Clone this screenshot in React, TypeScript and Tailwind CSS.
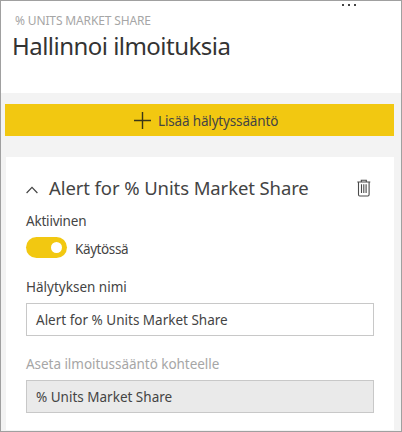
function ChevronUp() {
  return (
    <svg width="12" height="8" viewBox="0 0 12 8" fill="none" stroke="#444" strokeWidth="1.2">
      <path d="M0.6 7 L6 1.4 L11.4 7" />
    </svg>
  );
}

function Plus() {
  return (
    <svg width="17" height="17" viewBox="0 0 17 17" stroke="#3a3617" strokeWidth="1.4">
      <path d="M8.5 0V17M0 8.5H17" />
    </svg>
  );
}

function Trash() {
  return (
    <svg width="14" height="18" viewBox="0 0 14 18" fill="none" stroke="#4a4a4a" strokeWidth="1.1">
      <path d="M0.3 3H13.3M4.3 3V1.2H9.3V3M1.5 3V15.5Q1.5 17 2.7 17H10.9Q12.1 17 12.1 15.5V3M4.5 5.3V14M6.8 5.3V14M9.1 5.3V14" />
    </svg>
  );
}

export default function App() {
  return (
    <div className="flex h-[432px] w-[402px] flex-col overflow-hidden border border-[#a0a0a0] bg-[#f3f3f3] font-['Noto_Sans','Open_Sans',sans-serif] text-[13.5px] text-[#444]">
      <header className="flex h-[92px] shrink-0 justify-between bg-white">
        <div className="whitespace-nowrap pl-[11px] pt-[12px]">
          <div className="h-4 pl-[3px] text-[12px] leading-4 tracking-[-0.14px] text-[#a6a6a6]">% UNITS MARKET SHARE</div>
          <h1 className="mt-[1px] h-8 text-[24px] leading-8 tracking-[-0.53px] text-[#333]">Hallinnoi ilmoituksia</h1>
        </div>
        <div className="mr-[45px] mt-[3px] flex h-[2px] gap-1">
          <span className="size-[2px] bg-[#444]" />
          <span className="size-[2px] bg-[#444]" />
          <span className="size-[2px] bg-[#444]" />
        </div>
      </header>
      <button className="ml-1 mt-[11px] flex h-8 w-[389px] shrink-0 items-center whitespace-nowrap bg-[#f2c811] pl-[129px]">
        <Plus />
        <span className="ml-[7px] mt-[2px] leading-5 tracking-[-0.16px]">Lisää hälytyssääntö</span>
      </button>
      <main className="ml-[5px] mt-[21px] flex h-[273px] w-[388px] shrink-0 flex-col whitespace-nowrap bg-white pl-5">
        <div className="mt-[18px] flex h-7 items-center">
          <div className="mt-[1px]"><ChevronUp /></div>
          <h2 className="ml-[11px] mt-[-2px] w-[296px] text-[18.5px] leading-7 tracking-[-0.1px]">Alert for % Units Market Share</h2>
          <div className="ml-[12px] mt-[-2px]"><Trash /></div>
        </div>
        <div className="mt-[8px] h-5 leading-5 tracking-[-0.2px]">Aktiivinen</div>
        <div className="mt-[6px] flex h-[21px] items-center">
          <div className="flex h-[21px] w-[41px] items-center justify-end rounded-full bg-[#f2c811] pr-[5px]">
            <span className="size-[11px] rounded-full bg-white" />
          </div>
          <span className="ml-2 mt-[3px] leading-5 tracking-[-0.4px]">Käytössä</span>
        </div>
        <div className="mt-[19px] h-5 leading-5">Hälytyksen nimi</div>
        <div className="mt-[6px] flex h-[33px] w-[348px] items-center border border-[#c8c8c8] pl-[9px] pt-[2px]">Alert for % Units Market Share</div>
        <div className="mt-[18px] h-5 leading-5 tracking-[-0.04px] text-[#a6a6a6]">Aseta ilmoitussääntö kohteelle</div>
        <div className="mt-[6px] flex h-[33px] w-[348px] items-center border border-[#c8c8c8] bg-[#eaeaea] pl-[9px] pt-[2px]">% Units Market Share</div>
      </main>
    </div>
  );
}
